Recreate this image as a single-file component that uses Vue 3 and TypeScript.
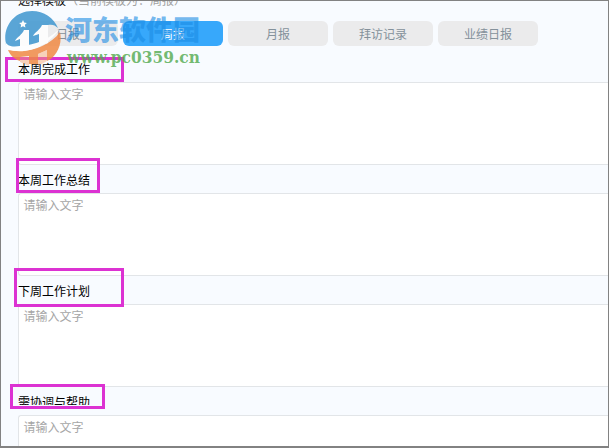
<script setup lang="ts">
import { ref } from 'vue';

const tabs = ['日报', '周报', '月报', '拜访记录', '业绩日报'];
const activeTab = ref(1);

const fields = ref([
  { title: '本周完成工作', mark: 'mark--done', value: '' },
  { title: '本周工作总结', mark: 'mark--summary', value: '' },
  { title: '下周工作计划', mark: 'mark--plan', value: '' },
  { title: '需协调与帮助', mark: 'mark--help', value: '' },
]);
</script>

<template>
  <div class="page">
    <header class="template-title">
      选择模板<span class="template-hint">（当前模板为：周报）</span>
    </header>

    <nav class="tabs">
      <button
        v-for="(tab, i) in tabs"
        :key="tab"
        class="tab"
        :class="{ 'tab--active': i === activeTab }"
        @click="activeTab = i"
      >
        {{ tab }}
      </button>
    </nav>

    <section v-for="field in fields" :key="field.title" class="field">
      <h2 class="field-title" :class="{ 'field-title--cut': field.mark === 'mark--help' }">
        <span>{{ field.title }}</span>
      </h2>
      <textarea v-model="field.value" class="field-input" placeholder="请输入文字" spellcheck="false" />
      <i class="mark" :class="field.mark"></i>
    </section>

    <!-- Watermark -->
    <svg class="watermark" width="210" height="72" viewBox="0 0 210 72">
      <g class="logo">
        <path fill="#3f97d0" d="M6 45 C2 27 14 11 32 11 C44 11 54 18 58 28 C55 25 52 24 48 25 V42 L38 46 L28 48 L11 48 Q8 47 6 45 Z" />
        <path fill="#f08a45" d="M8 50 C29 54 50 46 60 32 C63 46 55 58 47 61 V50 L38 54 V64 H29 V56 L20 57 V61 C14 59 10 55 8 50 Z" />
        <path fill="#f5a36d" fill-opacity="0.55" d="M20 57 H29 V66 L20 62 Z M38 54 L47 50 V61 L38 66 Z" />
        <path fill="#fff" d="M15 41 C17 37 22 35 24 30 H29 V47 H20 V39 Z M33 36 C35 32 40 30 42 25 H48 V43 L39 46 V34 Z" />
        <path fill="#fff" d="M5 40 C6 47 14 47 20 46 C36 45 50 39 60 28 C50 46 24 56 8 49 C6 46 5 43 5 40 Z" />
        <path fill="#fff" d="M23 20 l1.2 2.6 2.7 .3 -2 1.9 .5 2.7 -2.4 -1.3 -2.4 1.3 .5 -2.7 -2 -1.9 2.7 -.3z" />
      </g>
      <text class="brand" x="65" y="40" textLength="135">河东软件园</text>
      <text class="site" x="67" y="63" textLength="133" lengthAdjust="spacingAndGlyphs">www.pc0359.cn</text>
    </svg>
  </div>
</template>

<style>
body {
  margin: 0;
}
</style>

<style scoped>
.page {
  position: relative;
  box-sizing: border-box;
  width: 609px;
  height: 448px;
  overflow: hidden;
  padding-left: 17px;
  background: #f8fbff;
  border: 1px solid #828282;
  border-bottom-width: 2px;
  font-family: "Noto Sans CJK SC", sans-serif;
  font-size: 12px;
}

.template-title {
  height: 20px;
  margin-top: -9px;
  line-height: 16px;
  margin-bottom: 9px;
  color: #111;
}

.template-hint {
  color: #a2a2a2;
}

/* ── Tabs ── */
.tabs {
  display: flex;
  gap: 5px;
}

.tab {
  width: 100px;
  height: 25px;
  padding: 0;
  border: none;
  border-radius: 6px;
  background: #ebebec;
  color: #84919b;
  font: inherit;
  line-height: 25px;
  cursor: pointer;
}

.tab--active {
  background: #37a8fb;
  color: #fff;
}

/* ── Fields ── */
.field {
  position: relative;
  height: 111px;
}

.tabs + .field {
  margin-top: 7px;
}

.field-title {
  height: 29px;
  margin: 0;
  font-size: 12px;
  font-weight: 400;
  line-height: 32px;
  color: #000;
}

.field-title--cut span {
  display: block;
  height: 19px;
  overflow: hidden;
}

.field-input {
  display: block;
  box-sizing: border-box;
  width: 100%;
  height: 83px;
  padding: 2px 5px 3px 4.5px;
  border: 1px solid #e2e5e8;
  border-right: none;
  border-radius: 3px 0 0 3px;
  outline: none;
  resize: none;
  background: #fff;
  color: #333;
  font: inherit;
  line-height: 18px;
}

.field-input::placeholder {
  color: #a6a6a6;
}

/* ── Highlight frames over the titles ── */
.mark {
  position: absolute;
  box-sizing: border-box;
  border: 3px solid #dc32d2;
}

.mark--done {
  left: -13px;
  top: 4px;
  width: 119px;
  height: 25px;
}

.mark--summary {
  left: -2px;
  top: -6px;
  width: 84px;
  height: 35px;
}

.mark--plan {
  left: -4px;
  top: -7px;
  width: 110px;
  height: 39px;
}

.mark--help {
  left: -8px;
  top: -2px;
  width: 95px;
  height: 25px;
}

/* ── Watermark ── */
.watermark {
  position: absolute;
  left: -1px;
  top: -1px;
  pointer-events: none;
}

.logo {
  opacity: 0.85;
}

.brand {
  font-family: "Noto Sans CJK SC", sans-serif;
  font-size: 27px;
  font-weight: 900;
  fill: #1c8ce4;
  fill-opacity: 0.62;
}

.site {
  font-family: "DejaVu Serif", serif;
  font-size: 16px;
  font-weight: 700;
  fill: #4fa84b;
  fill-opacity: 0.8;
}
</style>
